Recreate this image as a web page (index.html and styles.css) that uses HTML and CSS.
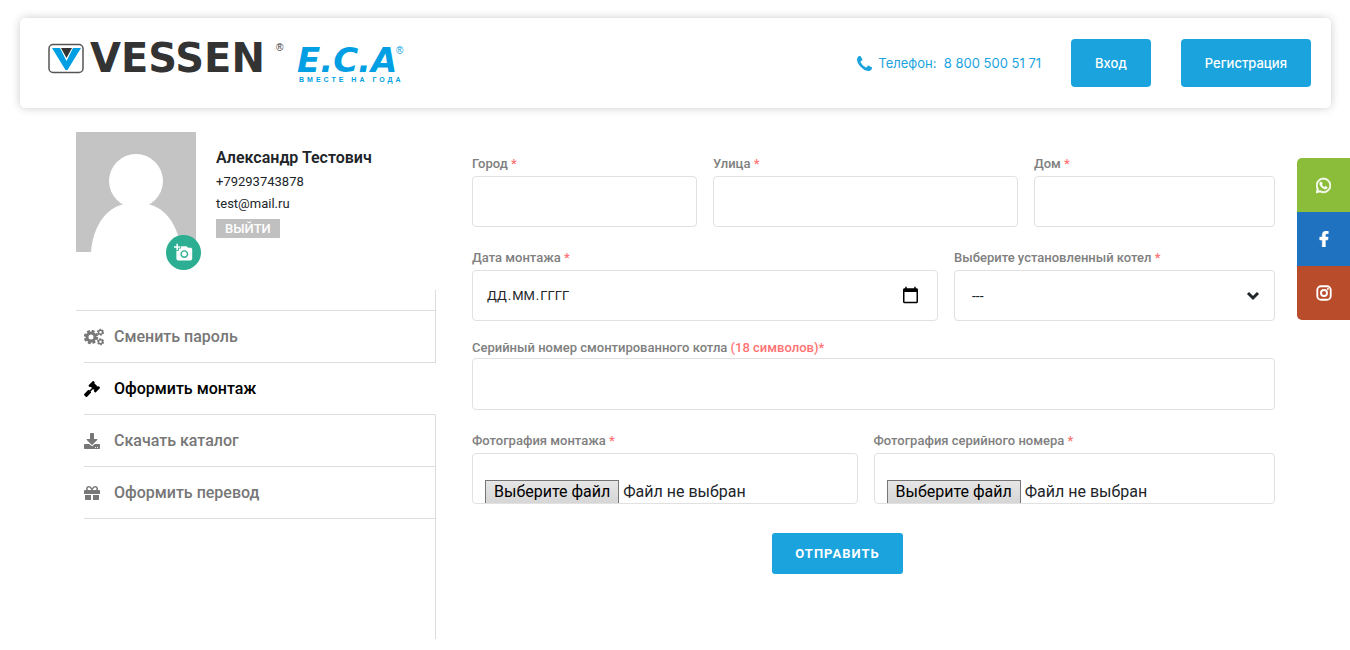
FILE: index.html
```html
<!DOCTYPE html>
<html lang="ru">
<head>
    <meta charset="UTF-8">
    <meta name="viewport" content="width=device-width, initial-scale=1.0">
    <title>Оформить монтаж</title>
    <link rel="stylesheet" href="styles.css">
</head>
<body>
    <header class="header">
        <a class="logo" href="#">
            <svg width="360" height="60" viewBox="0 0 360 60" role="img" aria-label="Vessen E.C.A">
                <rect x="2" y="11.500" width="34" height="28" rx="4" fill="#fff" stroke="#555" stroke-width="1.500"/>
                <path d="M5 15h8l6.500 13L26 15h8L20.500 37h-2z" fill="#009fe3"/>
                <path d="M14 15h11l-5.500 10z" fill="#333"/>
                <text class="logo-vessen" x="43" y="39">VESSEN</text>
                <text class="logo-reg dark" x="229" y="18">®</text>
                <text class="logo-eca" x="250" y="39">E.C.A</text>
                <text class="logo-reg" x="349" y="21">®</text>
                <text class="logo-slogan" x="252" y="49">ВМЕСТЕ НА ГОДА</text>
            </svg>
        </a>
        <div class="header-right">
            <a class="phone" href="tel:88005005171">
                <svg width="15" height="15" viewBox="0 128 1408 1408" fill="currentColor"><path d="M1408 1240q0 27-10 70.5t-21 68.5q-21 50-122 106-94 51-186 51-27 0-52.500-3.500t-57.500-12.500-47.500-14.500-55.500-20.500-49-18q-98-35-175-83-128-79-264.500-215.500t-215.500-264.500q-48-77-83-175-3-9-18-49t-20.500-55.500-14.500-47.500-12.500-57.500-3.500-52.500q0-92 51-186 56-101 106-122 25-11 68.500-21t70.500-10q14 0 21 3 18 6 53 76 11 19 30 54t35 63.500 31 53.500q3 4 17.500 25t21.500 35.500 7 28.500q0 20-28.500 50t-62 55-62 53-28.500 46q0 9 5 22.500t8.500 20.500 14 24 11.500 19q76 137 174 235t235 174q2 1 19 11.500t24 14 20.500 8.500 22.500 5q18 0 46-28.500t53-62 55-62 50-28.500q14 0 28.500 7t35.500 21.500 25 17.500q25 15 53.500 31t63.500 35 54 30q70 35 76 53 3 7 3 21z"/></svg>
                <span>Телефон:&nbsp; 8 800 500 51 71</span>
            </a>
            <a class="btn" href="#">Вход</a>
            <a class="btn" href="#">Регистрация</a>
        </div>
    </header>

    <main class="container">
        <aside class="sidebar">
            <div class="profile">
                <div class="avatar">
                    <svg width="120" height="120" viewBox="0 0 120 120">
                        <rect width="120" height="120" fill="#c4c4c4"/>
                        <circle cx="60" cy="49" r="27" fill="#fff"/>
                        <path d="M15 120C17 94 30 76 48 72h24c18 4 31 22 33 48z" fill="#fff"/>
                    </svg>
                    <button class="avatar-btn" type="button" aria-label="Загрузить фото">
                        <svg width="19" height="19" viewBox="0 0 24 24" fill="currentColor"><path d="M3 4V1h2v3h3v2H5v3H3V6H0V4h3zm3 6V7h3V4h7l1.830 2H21c1.100 0 2 .9 2 2v12c0 1.100-.9 2-2 2H5c-1.100 0-2-.9-2-2V10h3zm7 9c2.760 0 5-2.240 5-5s-2.240-5-5-5-5 2.240-5 5 2.240 5 5 5zm-3.200-5c0 1.770 1.430 3.200 3.200 3.200s3.200-1.430 3.200-3.200-1.430-3.200-3.200-3.200-3.200 1.430-3.200 3.200z"/></svg>
                    </button>
                </div>
                <div class="profile-info">
                    <h1>Александр Тестович</h1>
                    <p>+79293743878</p>
                    <p>test@mail.ru</p>
                    <a class="logout" href="#">ВЫЙТИ</a>
                </div>
            </div>
            <ul class="menu">
                <li>
                    <a href="#">
                        <svg width="20" height="18" viewBox="0 0 20 18" fill="none" stroke="currentColor">
                            <circle cx="7" cy="9" r="4" stroke-width="3"/>
                            <circle cx="7" cy="9" r="6" stroke-width="2.400" stroke-dasharray="2.900 1.812"/>
                            <circle cx="16.500" cy="4.200" r="2" stroke-width="1.500"/>
                            <circle cx="16.500" cy="4.200" r="2.900" stroke-width="1.300" stroke-dasharray="1.800 1.236"/>
                            <circle cx="16.500" cy="13.800" r="2" stroke-width="1.500"/>
                            <circle cx="16.500" cy="13.800" r="2.900" stroke-width="1.300" stroke-dasharray="1.800 1.236"/>
                        </svg>
                        <span>Сменить пароль</span>
                    </a>
                </li>
                <li class="active">
                    <a href="#">
                        <svg width="16" height="16" viewBox="0 0 512 512" fill="currentColor"><path d="M504.971 199.362l-22.627-22.627c-9.373-9.373-24.569-9.373-33.941 0l-5.657 5.657L329.608 69.255l5.657-5.657c9.373-9.373 9.373-24.569 0-33.941L312.638 7.029c-9.373-9.373-24.569-9.373-33.941 0L154.246 131.480c-9.373 9.373-9.373 24.569 0 33.941l22.627 22.627c9.373 9.373 24.569 9.373 33.941 0l5.657-5.657 39.598 39.598-81.040 81.040-5.657-5.657c-12.497-12.497-32.758-12.497-45.255 0L9.373 412.118c-12.497 12.497-12.497 32.758 0 45.255l45.255 45.255c12.497 12.497 32.758 12.497 45.255 0l114.745-114.745c12.497-12.497 12.497-32.758 0-45.255l-5.657-5.657 81.040-81.040 39.598 39.598-5.657 5.657c-9.373 9.373-9.373 24.569 0 33.941l22.627 22.627c9.373 9.373 24.569 9.373 33.941 0l124.451-124.451c9.372-9.372 9.372-24.568 0-33.941z"/></svg>
                        <span>Оформить монтаж</span>
                    </a>
                </li>
                <li>
                    <a href="#">
                        <svg width="16" height="16" viewBox="0 0 512 512" fill="currentColor"><path d="M216 0h80c13.300 0 24 10.700 24 24v168h87.700c17.800 0 26.700 21.500 14.100 34.100L269.700 378.300c-7.500 7.500-19.800 7.500-27.300 0L90.100 226.100c-12.600-12.600-3.700-34.100 14.100-34.100H192V24c0-13.300 10.700-24 24-24zm296 376v112c0 13.300-10.700 24-24 24H24c-13.300 0-24-10.700-24-24V376c0-13.300 10.700-24 24-24h146.700l49 49c20.100 20.100 52.500 20.100 72.600 0l49-49H488c13.300 0 24 10.700 24 24zm-124 88c0-11-9-20-20-20s-20 9-20 20 9 20 20 20 20-9 20-20zm64 0c0-11-9-20-20-20s-20 9-20 20 9 20 20 20 20-9 20-20z"/></svg>
                        <span>Скачать каталог</span>
                    </a>
                </li>
                <li>
                    <a href="#">
                        <svg width="16" height="16" viewBox="0 0 512 512" fill="currentColor"><path d="M32 448c0 17.700 14.300 32 32 32h160V320H32v128zm256 32h160c17.700 0 32-14.300 32-32V320H288v160zm192-320h-42.100c6.200-12.100 10.100-25.500 10.100-40 0-48.500-39.500-88-88-88-41.600 0-68.500 21.300-103 68.300-34.500-47-61.400-68.300-103-68.300-48.500 0-88 39.500-88 88 0 14.500 3.800 27.900 10.100 40H32c-17.700 0-32 14.300-32 32v80c0 8.800 7.200 16 16 16h480c8.800 0 16-7.200 16-16v-80c0-17.700-14.300-32-32-32zm-326.100 0c-22.100 0-40-17.900-40-40s17.900-40 40-40c19.900 0 34.600 3.300 86.100 80h-86.100zm206.100 0h-86.100c51.400-76.500 65.700-80 86.100-80 22.100 0 40 17.900 40 40s-17.900 40-40 40z"/></svg>
                        <span>Оформить перевод</span>
                    </a>
                </li>
            </ul>
        </aside>

        <form class="form">
            <div class="row row-address">
                <div class="field">
                    <label for="city">Город <span>*</span></label>
                    <input type="text" id="city">
                </div>
                <div class="field">
                    <label for="street">Улица <span>*</span></label>
                    <input type="text" id="street">
                </div>
                <div class="field">
                    <label for="house">Дом <span>*</span></label>
                    <input type="text" id="house">
                </div>
            </div>
            <div class="row row-boiler">
                <div class="field">
                    <label for="date">Дата монтажа <span>*</span></label>
                    <div class="stack">
                        <input type="date" id="date">
                        <div class="date-text"><span>ДД</span>.<span>ММ</span>.<span>ГГГГ</span></div>
                    </div>
                </div>
                <div class="field">
                    <label for="boiler">Выберите установленный котел <span>*</span></label>
                    <div class="stack">
                        <select id="boiler">
                            <option>---</option>
                        </select>
                        <svg class="chevron" width="14" height="10" viewBox="0 0 14 10" fill="none" stroke="#212529" stroke-width="3"><path d="M2 2l5 5 5-5"/></svg>
                    </div>
                </div>
            </div>
            <div class="row">
                <div class="field serial">
                    <label for="serial">Серийный номер смонтированного котла <span>(18 символов)*</span></label>
                    <input type="text" id="serial" maxlength="18">
                </div>
            </div>
            <div class="row row-photos">
                <div class="field">
                    <label for="photo">Фотография монтажа <span>*</span></label>
                    <div class="stack file">
                        <input type="file" id="photo">
                        <div class="file-view"><span class="file-btn">Выберите файл</span><span>Файл не выбран</span></div>
                    </div>
                </div>
                <div class="field">
                    <label for="serial-photo">Фотография серийного номера <span>*</span></label>
                    <div class="stack file">
                        <input type="file" id="serial-photo">
                        <div class="file-view"><span class="file-btn">Выберите файл</span><span>Файл не выбран</span></div>
                    </div>
                </div>
            </div>
            <div class="actions">
                <button class="submit" type="submit">ОТПРАВИТЬ</button>
            </div>
        </form>
    </main>

    <div class="social">
        <a class="whatsapp" href="#" aria-label="WhatsApp">
            <svg width="15" height="17" viewBox="0 0 448 512" fill="currentColor" stroke="currentColor" stroke-width="20"><path d="M380.900 97.100C339 55.100 283.200 32 223.900 32c-122.400 0-222 99.600-222 222 0 39.100 10.200 77.300 29.600 111L0 480l117.700-30.900c32.400 17.700 68.900 27 106.100 27h.1c122.300 0 224.100-99.600 224.100-222 0-59.300-25.200-115-67.100-157zm-157 341.600c-33.200 0-65.700-8.900-94-25.700l-6.700-4-69.800 18.300L72 359.200l-4.400-7c-18.500-29.400-28.200-63.300-28.200-98.200 0-101.700 82.800-184.500 184.600-184.500 49.300 0 95.600 19.200 130.400 54.100 34.800 34.900 56.200 81.200 56.100 130.500 0 101.800-84.900 184.600-186.600 184.600zm101.200-138.200c-5.500-2.800-32.800-16.200-37.900-18-5.100-1.900-8.800-2.800-12.500 2.800-3.700 5.600-14.300 18-17.600 21.800-3.200 3.700-6.500 4.200-12 1.400-32.600-16.300-54-29.100-75.500-66-5.700-9.800 5.700-9.100 16.300-30.300 1.800-3.700.9-6.900-.5-9.700-1.400-2.800-12.500-30.100-17.100-41.200-4.500-10.800-9.100-9.300-12.500-9.500-3.200-.2-6.900-.2-10.600-.2-3.700 0-9.700 1.400-14.800 6.900-5.100 5.600-19.400 19-19.400 46.300 0 27.300 19.900 53.700 22.600 57.400 2.800 3.700 39.100 59.700 94.800 83.800 35.200 15.200 49 16.500 66.600 13.900 10.700-1.600 32.800-13.400 37.400-26.400 4.600-13 4.600-24.100 3.200-26.400-1.300-2.500-5-3.900-10.500-6.600z"/></svg>
        </a>
        <a class="facebook" href="#" aria-label="Facebook">
            <svg width="12" height="16" viewBox="0 0 320 512" fill="currentColor" stroke="currentColor" stroke-width="16"><path d="M279.140 288l14.220-92.660h-88.910v-60.130c0-25.350 12.420-50.060 52.240-50.060h40.420V6.260S260.430 0 225.360 0c-73.220 0-121.080 44.380-121.080 124.720v70.620H22.890V288h81.390v224h100.170V288z"/></svg>
        </a>
        <a class="instagram" href="#" aria-label="Instagram">
            <svg width="16" height="16" viewBox="0 0 16 16" fill="none" stroke="currentColor" stroke-width="1.900"><rect x="1.300" y="1.300" width="13.400" height="13.400" rx="3.800"/><circle cx="8" cy="8" r="3"/><circle cx="11.900" cy="4.100" r="1" fill="currentColor" stroke="none"/></svg>
        </a>
    </div>
</body>
</html>
```

FILE: styles.css
```css
* {
    box-sizing: border-box;
}
body {
    margin: 0;
    font-family: Roboto, sans-serif;
    font-size: 13px;
    color: #212529;
    background: #fff;
}
a {
    text-decoration: none;
}
svg {
    display: block;
}

/* header */
.header {
    display: flex;
    justify-content: space-between;
    align-items: center;
    margin: 18px 19px 24px 20px;
    padding: 15px 20px 15px 27px;
    border-radius: 5px;
    box-shadow: 0 0 10px rgba(0, 0, 0, 0.2);
}
.logo-vessen {
    font-family: "DejaVu Sans", sans-serif;
    font-size: 40px;
    font-weight: bold;
    fill: #333;
}
.logo-eca {
    font-family: "DejaVu Sans", sans-serif;
    font-size: 34px;
    font-weight: bold;
    font-style: italic;
    fill: #009fe3;
}
.logo-reg {
    font-family: "Liberation Sans", sans-serif;
    font-size: 10px;
    fill: #009fe3;
}
.logo-reg.dark {
    fill: #333;
}
.logo-slogan {
    font-family: "Liberation Sans", sans-serif;
    font-size: 7px;
    font-weight: bold;
    letter-spacing: 3px;
    fill: #009fe3;
}
.header-right {
    display: flex;
    align-items: center;
    gap: 30px;
    font-family: Inter, sans-serif;
}
.phone {
    display: flex;
    align-items: center;
    gap: 6px;
    color: #1aa3dd;
}
.btn {
    padding: 0 24px;
    border-radius: 4px;
    background: #1aa3dd;
    color: #fff;
    font-weight: 500;
    line-height: 48px;
}

/* page */
.container {
    display: flex;
    gap: 36px;
    margin: 0 75px 0 76px;
}
.sidebar {
    display: flex;
    flex-direction: column;
    flex: 0 0 360px;
}
.profile {
    display: flex;
    gap: 20px;
    height: 158px;
}
.avatar {
    position: relative;
    width: 120px;
    height: 120px;
}
.avatar-btn {
    position: absolute;
    right: -5px;
    bottom: -18px;
    display: flex;
    align-items: center;
    justify-content: center;
    width: 35px;
    height: 35px;
    padding: 0;
    border: none;
    border-radius: 50%;
    background: #2bae91;
    color: #fff;
}
.profile-info {
    padding-top: 14px;
}
.profile-info h1 {
    margin: 0 0 2px;
    font-size: 16px;
    font-weight: 600;
    line-height: 23px;
}
.profile-info p {
    margin: 0;
    line-height: 22px;
}
.logout {
    display: inline-block;
    margin-top: 4px;
    padding: 0 9px;
    background: #c0c0c0;
    color: #fff;
    font-weight: 500;
    line-height: 19px;
}

/* menu */
.menu {
    margin: 0;
    padding: 0;
    list-style: none;
}
.menu::before,
.menu::after {
    content: "";
    display: block;
    height: 20px;
    border-right: 1px solid #ddd;
    border-bottom: 1px solid #ddd;
}
.menu::after {
    height: 120px;
    border-bottom: none;
}
.menu li {
    margin-left: 8px;
    border-right: 1px solid #ddd;
    border-bottom: 1px solid #ddd;
}
.menu li.active {
    border-right-color: transparent;
}
.menu a {
    display: grid;
    grid-template-columns: 30px 1fr;
    align-items: center;
    color: #777;
    font-size: 16px;
    font-weight: 500;
    line-height: 51px;
}
.menu .active a {
    color: #000;
}

/* form */
.form {
    flex: 1;
    padding-top: 24px;
}
.row {
    display: grid;
    gap: 16px;
    margin-bottom: 23px;
}
.row-address {
    grid-template-columns: 225fr 305fr 241fr;
}
.row-boiler {
    grid-template-columns: 466fr 321fr;
    margin-bottom: 19px;
}
.row-photos {
    grid-template-columns: 386fr 402fr;
    margin-bottom: 29px;
}
.field {
    display: grid;
    gap: 4px;
}
.field.serial {
    gap: 2px;
}
.field label {
    color: #808080;
    font-weight: 500;
    line-height: 16px;
}
.field label span {
    color: #ff7373;
}
.field input,
.field select {
    width: 100%;
    height: 51px;
    padding: 0 14px;
    border: 1px solid #e1e1e1;
    border-radius: 4px;
    background: #fff;
    color: #212529;
    font-family: Roboto, sans-serif;
    font-size: 14px;
}
.field.serial input {
    height: 52px;
}
.stack {
    display: grid;
    align-items: center;
}
.stack > * {
    grid-area: 1 / 1;
}
.field input[type="date"] {
    padding-right: 17px;
}
input[type="date"]::-webkit-datetime-edit {
    opacity: 0;
}
input[type="date"]::-webkit-calendar-picker-indicator {
    width: 19px;
    height: 19px;
    padding: 0;
}
.date-text {
    padding-left: 14px;
    font-size: 13px;
    pointer-events: none;
}
.date-text span {
    padding: 0 1px;
}
.field select {
    padding: 0 17px;
    appearance: none;
}
.chevron {
    justify-self: end;
    margin-right: 15px;
    pointer-events: none;
}
.file {
    overflow: hidden;
    border: 1px solid #e1e1e1;
    border-radius: 4px;
}
.field .file input {
    height: 49px;
    opacity: 0;
}
.file-view {
    display: flex;
    align-items: flex-end;
    align-self: end;
    gap: 4px;
    padding-left: 12px;
    font-size: 16px;
    line-height: 22px;
    pointer-events: none;
}
.file-btn {
    padding: 0 8px;
    border: 1px solid #767676;
    border-bottom: none;
    background: linear-gradient(#e6e6e6, #d6d6d6);
    color: #000;
}
.actions {
    display: flex;
    justify-content: center;
    padding-right: 72px;
}
.submit {
    padding: 0 23px;
    border: none;
    border-radius: 3px;
    background: #1aa3dd;
    color: #fff;
    font-family: Roboto, sans-serif;
    font-size: 13px;
    font-weight: bold;
    letter-spacing: 1px;
    line-height: 41px;
}

/* social buttons pinned to the right edge */
.social {
    position: fixed;
    top: 158px;
    right: 0;
    overflow: hidden;
    border-radius: 5px 0 0 5px;
}
.social a {
    display: flex;
    align-items: center;
    justify-content: center;
    width: 53px;
    height: 54px;
    color: #fff;
}
.whatsapp {
    background: #8bbd3b;
}
.facebook {
    background: #1f72bf;
}
.instagram {
    background: #b84c2b;
}
```
